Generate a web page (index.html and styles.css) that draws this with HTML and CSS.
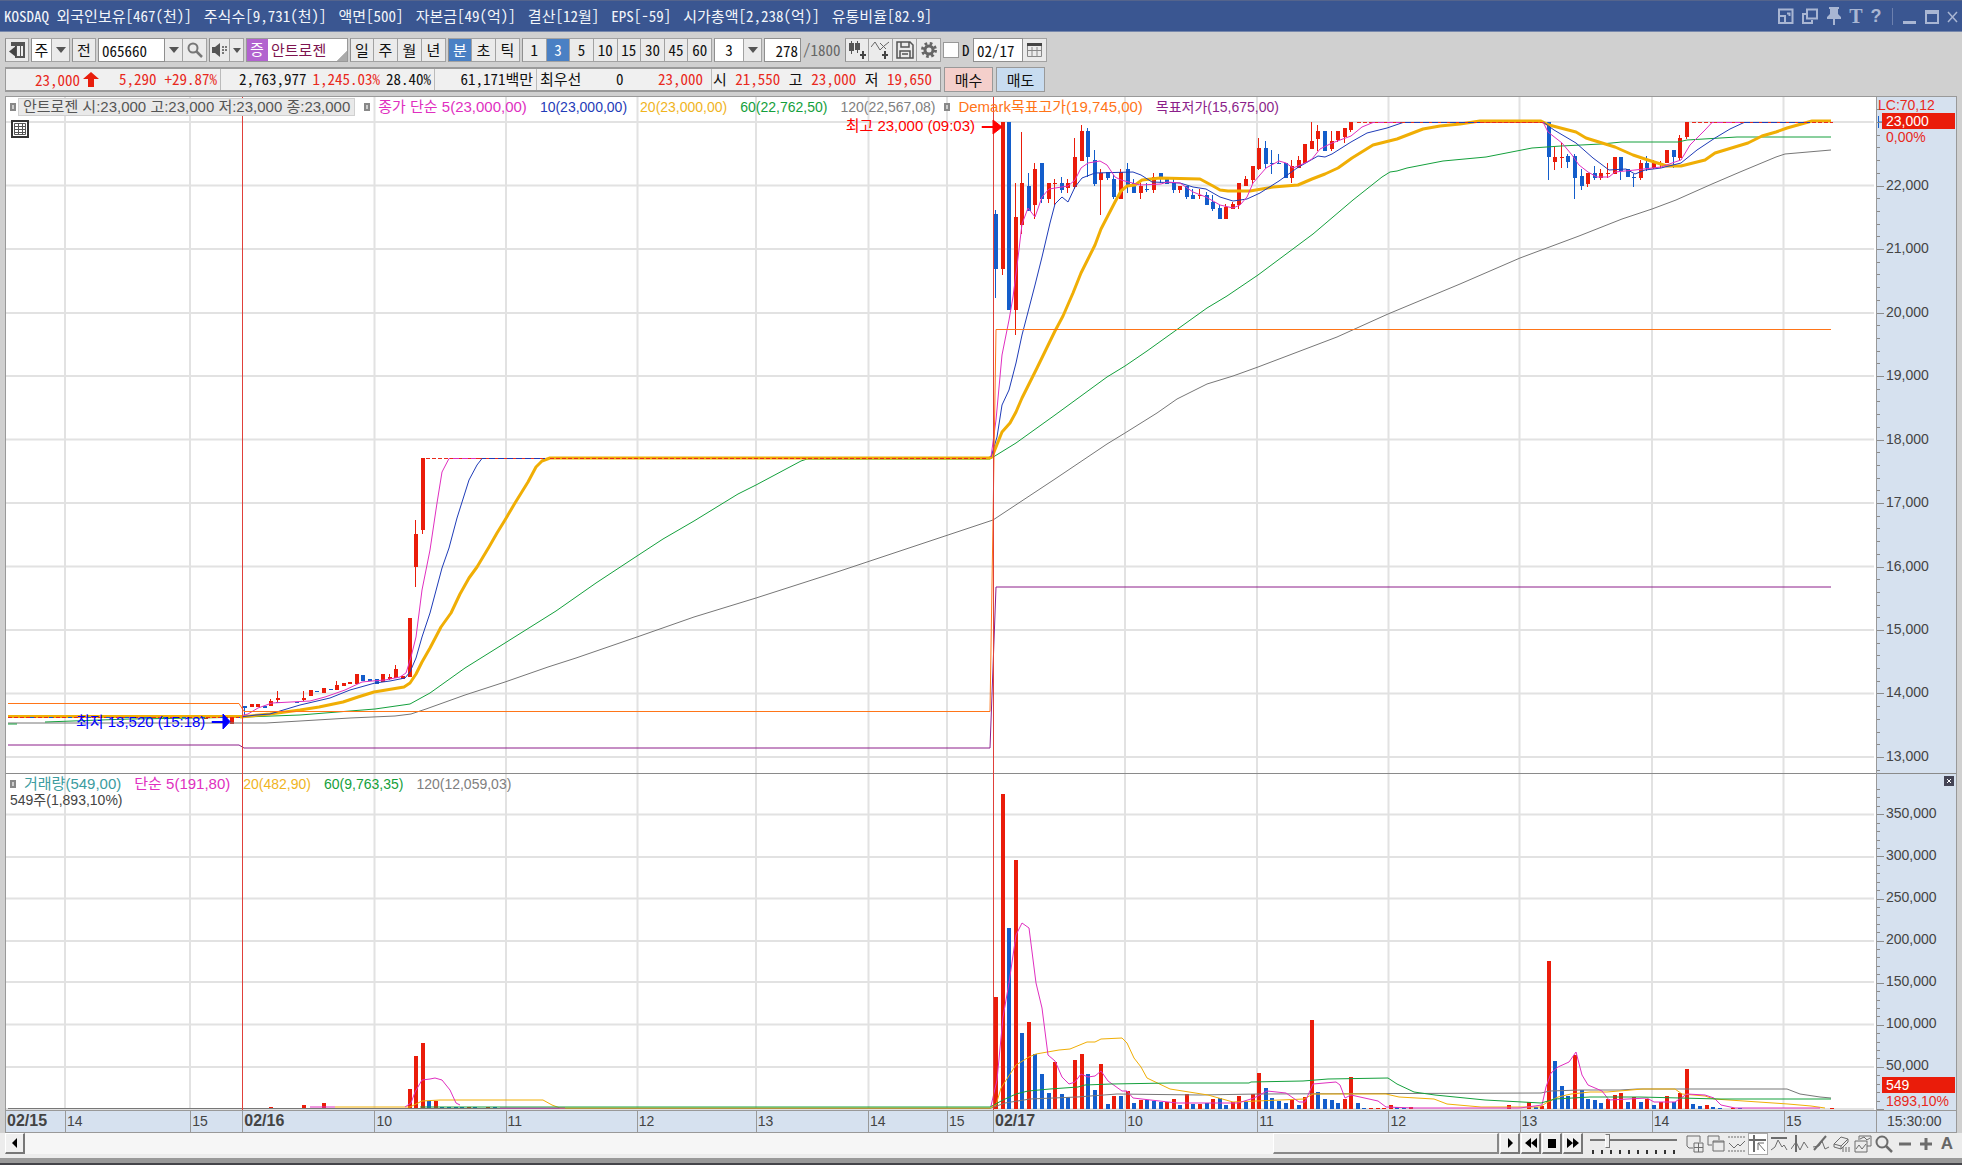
FILE: index.html
```
<!DOCTYPE html>
<html lang="ko">
<head>
<meta charset="utf-8">
<title>안트로젠 차트</title>
<link rel="stylesheet" href="styles.css">
</head>
<body>
<header class="titlebar">
  <h1 class="title"><span>KOSDAQ 외국인보유[467(천)]</span><span>주식수[9,731(천)]</span><span>액면[500]</span><span>자본금[49(억)]</span><span>결산[12월]</span><span>EPS[-59]</span><span>시가총액[2,238(억)]</span><span>유통비율[82.9]</span></h1>
  <div class="winbtns">
    <button aria-label="화면 분할"><svg width="16" height="16" viewBox="0 0 16 16"><path d="M1 1.500H14.500V15H1ZM1 8H7V15M9 5.500h2.500V8" fill="none" stroke="currentColor" stroke-width="2"/></svg></button>
    <button aria-label="화면 복사"><svg width="16" height="16" viewBox="0 0 16 16"><path d="M5 1.500h10v9H5ZM4 6H1v9h9v-3" fill="none" stroke="currentColor" stroke-width="2"/></svg></button>
    <button aria-label="고정"><svg width="16" height="18" viewBox="0 0 16 18"><path d="M3 0h10v2h-1v5l3 3v2H9v6H7v-6H1v-2l3-3V2H3z" fill="currentColor"/></svg></button>
    <button class="serif" aria-label="글꼴">T</button>
    <button class="qmark" aria-label="도움말">?</button>
    <span class="winsep"></span>
    <button aria-label="최소화"><svg width="14" height="16" viewBox="0 0 14 16"><path d="M0 13h13v3H0z" fill="currentColor"/></svg></button>
    <button aria-label="최대화"><svg width="14" height="16" viewBox="0 0 14 16"><path d="M1 3h12v12H1Z" fill="none" stroke="currentColor" stroke-width="2"/><path d="M0 2h14v4H0z" fill="currentColor"/></svg></button>
    <button aria-label="닫기"><svg width="11" height="14" viewBox="0 0 11 14"><path d="M1 3L10 13M10 3L1 13" fill="none" stroke="currentColor" stroke-width="1.500"/></svg></button>
  </div>
</header>

<div class="toolbar">
  <button class="b w24" aria-label="목록"><svg width="16" height="16" viewBox="0 0 16 16"><path d="M2 0h14v16H6V4H2z" fill="#555"/><path d="M8 4h3v10H8zM12 4h2v10h-2z" fill="#eee"/><path d="M7 4v11L0 9.500z" fill="#444"/></svg></button>
  <div class="group"><button class="b white w21">주</button><button class="b w18" aria-label="주기 선택"><i class="tri"></i></button></div>
  <button class="b w24">전</button>
  <div class="group"><input class="field w67" aria-label="종목코드" value="065660"><button class="b w18" aria-label="종목 목록"><i class="tri"></i></button><button class="b w24" aria-label="검색"><svg width="16" height="16" viewBox="0 0 16 16"><circle cx="6" cy="6" r="4.500" fill="none" stroke="#777" stroke-width="2"/><path d="M9 9l6 6" stroke="#777" stroke-width="2.500"/></svg></button></div>
  <div class="group"><button class="b w21" aria-label="음성"><svg width="16" height="14" viewBox="0 0 16 14"><path d="M0 4h3l5-4v14l-5-4H0z" fill="#555"/><path d="M10 4h2M13 4h2M10 7h2M13 7h2M10 10h2" stroke="#777" stroke-width="2"/></svg></button><button class="b w14" aria-label="음성 설정"><i class="tri sm"></i></button></div>
  <div class="stock"><span class="badge">증</span><span class="name">안트로젠</span></div>
  <div class="group"><button class="b w24">일</button><button class="b w24">주</button><button class="b w24">월</button><button class="b w24">년</button></div>
  <div class="group"><button class="b w24 on">분</button><button class="b w24">초</button><button class="b w24">틱</button></div>
  <div class="group minutes"><button class="b">1</button><button class="b on">3</button><button class="b">5</button><button class="b">10</button><button class="b">15</button><button class="b">30</button><button class="b">45</button><button class="b">60</button></div>
  <div class="group"><button class="b white w30">3</button><button class="b w18" aria-label="분 선택"><i class="tri"></i></button></div>
  <div class="count"><input class="field w37 right" aria-label="조회 개수" value="278"><span class="total">/1800</span></div>
  <div class="group">
    <button class="b w24" aria-label="지표 추가"><svg width="19" height="18" viewBox="0 0 19 18"><path d="M3.500 0v13M9.500 0v12" stroke="#555"/><path d="M1 2h5v8H1zM7 2h5v7H7z" fill="#555"/><path d="M15 10v8M12 14h6" stroke="#444" stroke-width="2"/></svg></button>
    <button class="b w24" aria-label="선 추가"><svg width="19" height="18" viewBox="0 0 19 18"><path d="M0 6L4 1l5 8 4-4 5-4M9 2l6 6" fill="none" stroke="#666"/><path d="M14 10v8M11 14h6" stroke="#444" stroke-width="2"/></svg></button>
    <button class="b w24" aria-label="저장"><svg width="18" height="18" viewBox="0 0 18 18"><path d="M1 1h13l3 3v13H1ZM5 1v5h8V1M4 17v-7h10v7M6 13h6" fill="none" stroke="#555" stroke-width="1.500"/></svg></button>
    <button class="b w24" aria-label="설정"><svg width="16" height="16" viewBox="0 0 16 16"><circle cx="8" cy="8" r="6.500" fill="none" stroke="#666" stroke-width="3" stroke-dasharray="2.600 2.500"/><circle cx="8" cy="8" r="4" fill="none" stroke="#666" stroke-width="3"/></svg></button>
  </div>
  <label class="dcheck"><input type="checkbox">D</label>
  <div class="group"><input class="field w50" aria-label="날짜" value="02/17"><button class="b w24" aria-label="달력"><svg width="15" height="14" viewBox="0 0 15 14"><path d="M.5.500h14v13H.5ZM1 7.500h13M5 4v9M10 4v9" fill="none" stroke="#888"/><path d="M0 0h15v3H0z" fill="#444"/></svg></button></div>
</div>

<div class="quote">
  <div class="quotebox">
    <div class="q q1"><span class="up">23,000<svg class="arrow" width="16" height="15" viewBox="0 0 16 15"><path d="M8 0l8 7h-5v8H5V7H0z" fill="#e81e0c"/></svg></span><span class="up">5,290</span><span class="up">+29.87%</span></div>
    <div class="q q2"><span>2,763,977</span><span class="up">1,245.03%</span><span>28.40%</span></div>
    <div class="q q3"><span>61,171백만</span></div>
    <div class="q q4"><span>최우선</span><span>0</span><span class="up">23,000</span></div>
    <div class="q q5"><span>시</span><span class="up">21,550</span><span>고</span><span class="up">23,000</span><span>저</span><span class="up">19,650</span></div>
  </div>
  <button class="trade buy">매수</button>
  <button class="trade sell">매도</button>
</div>

<main class="chart">
  <div class="plot">
    <svg id="plot" class="plotsvg" viewBox="6 97 1870 1013" preserveAspectRatio="none" role="img" aria-label="주가와 거래량 차트">
      <path class="grid" d="M5 122H1874M5 185.500H1874M5 249H1874M5 313H1874M5 376H1874M5 439.500H1874M5 503H1874M5 566.500H1874M5 630H1874M5 693.500H1874M5 757H1874M5 814.500H1874M5 857H1874M5 898.500H1874M5 941H1874M5 982H1874M5 1024.500H1874M5 1067H1874M5 1109H1874M65 97V1111M190 97V1111M374.500 97V1111M506 97V1111M637.500 97V1111M756 97V1111M868.500 97V1111M947 97V1111M1125 97V1111M1257 97V1111M1388.500 97V1111M1519.500 97V1111M1652 97V1111M1783.500 97V1111"/>
      <path class="split" d="M5 773.500H1876"/>
      <g id="bars"></g>
      <path class="dash red" d="M426 458.500H988M1357 122.500H1545M1692 122.500H1833"/>
      <path class="dash blue alt" d="M276 702.500H300"/>
      <path class="ln g120" d="M8 723L266 723 300 721 350 718 395 716 411 714 426 709 465 695 505 682 548 667 576 658 637 637 694 617 756 598 840 571 993 520 1055 479 1107 444 1125 433 1157 413 1177 399 1207 384 1233 376 1258 367 1287 356 1337 337 1388 314 1460 284 1520 258 1579 236 1622 219 1652 209 1676 200 1712 184 1740 172 1776 157 1785 154 1831 150"/>
      <path class="ln g60" d="M8 724L17 724M45 722L100 720 130 719 200 718 245 717 300 715 350 711 375 709 410 704 430 693 465 668 505 643 556 611 596 583 637 556 663 539 694 521 738 494 756 485 801 461 807 459 990 459 1016 443 1055 415 1107 377 1125 366 1147 351 1207 308 1227 296 1258 275 1313 234 1353 200 1382 177 1390 172 1397 171 1407 168 1443 161 1486 157 1532 148 1561 146 1601 144 1622 142 1678 142 1687 140 1737 137 1831 137"/>
      <path class="ln g20 thick" d="M240 717L270 714 300 710 319 707 343 702 358 697 374 692 404 687 410 683 416 674 422 662 430 648 441 627 451 613 460 594 469 578 477 567 489 547 497 533 505 520 515 503 528 482 536 467 542 461 550 458 989 458 992 457 996 447 1002 432 1010 423 1016 412 1022 398 1037 368 1055 331 1063 316 1073 293 1081 273 1095 245 1101 229 1115 202 1121 191 1127 186 1135 185 1142 180 1160 178 1200 179 1213 186 1220 190 1228 191 1250 191 1273 187 1298 185 1312 179 1325 174 1338 168 1352 158 1373 145 1397 139 1410 134 1423 129 1440 126 1460 124 1480 121 1541 121 1549 125 1576 132 1586 138 1615 147 1633 155 1651 161 1667 166 1681 166 1705 160 1715 153 1748 143 1762 136 1776 132 1787 128 1812 121 1831 121"/>
      <path class="dash red" d="M550 458.500H988M1480 122.500H1545M1812 122.500H1833"/>
      <path class="ln g10" d="M240 717L256 715 270 714 300 705 330 698 350 690 375 683 390 681 405 678 410 672 416 658 422 637 430 613 442 568 449 548 457 518 469 480 477 465 482 458.500 545 458.500M991 457L997 437 1002 405 1009 390 1016 363 1022 335 1028 312 1035 285 1042 257 1050 223 1055 204 1062 197 1068 202 1075 187 1082 178 1095 173 1133 172 1141 175 1152 182 1180 183 1193 187 1206 189 1220 197 1233 201 1247 199 1260 193 1279 181 1297 168 1318 156 1325 157 1332 154 1351 142 1367 133 1387 128 1403 122.500 1480 122.500M1543 122L1554 130 1576 143 1593 158 1609 170 1626 169 1635 174 1645 170 1661 168 1681 163 1697 150 1715 138 1730 129 1744 122.500 1810 122.500"/>
      <path class="ln g5" d="M240 716L248 714 258 708 272 703 310 701 325 697 345 690 362 682 372 681 385 680 400 677 406 673 411 657 416 637 422 590 430 550 437 503 442 472 449 458.500 476 458.500M991 457L996 420 1002 355 1009 320 1013 297 1018 258 1022 224 1028 208 1035 217 1042 197 1049 189 1068 186 1075 180 1081 168 1088 163 1100 161 1107 165 1115 177 1121 180 1140 185 1161 184 1167 182 1180 183 1193 192 1206 197 1220 205 1233 208 1240 205 1247 197 1253 183 1266 168 1279 161 1286 163 1293 168 1305 163 1312 159 1320 149 1332 143 1351 136 1362 127 1373 122.500 1400 122.500M1543 122L1548 132 1562 143 1572 155 1579 165 1588 172 1597 177 1609 177 1615 172 1635 170 1661 167 1675 162 1681 160 1690 145 1705 130 1712 122.500 1740 122.500"/>
      <path class="dash red thin" d="M450 458.500H545M1375 122.500H1480M1714 122.500H1812"/>
      <path class="ln g20 thick" d="M8 716.500H243"/>
      <path class="dash red" d="M8 717.500H240"/>
      <path class="dash blue alt" d="M30 717.500H240"/>
      <path class="ln high" d="M8 703.500H239L244 711.500H990L996 329.500H1831"/>
      <path class="ln low" d="M8 745H239L244 748H990L996 587H1831"/>
      <path class="ln g120" d="M8 1108.500H990L1005 1103 1030 1099 1077 1097 1117 1094 1200 1095 1258 1094 1541 1093 1550 1091 1580 1090 1620 1090 1637 1089 1787 1089 1800 1094 1820 1097 1831 1098"/>
      <path class="ln g20" d="M335 1107L410 1107 422 1101 440 1100 543 1100 552 1105 560 1108 990 1108 996 1105 1001 1088 1016 1065 1029 1057 1036 1054 1059 1050 1070 1049 1087 1042 1095 1042 1101 1039 1122 1038 1127 1043 1134 1058 1141 1067 1147 1078 1170 1089 1208 1095 1233 1102 1304 1099 1313 1094 1386 1094 1399 1097 1434 1099 1447 1104 1481 1107 1540 1107 1546 1103 1558 1097 1571 1094 1590 1092 1607 1092 1643 1089 1675 1089 1682 1094 1705 1096 1714 1099 1788 1104 1811 1106 1825 1108"/>
      <path class="ln g5" d="M310 1107L335 1107M405 1107L411 1103 415 1092 422 1080 430 1079 435 1078 442 1080 450 1090 456 1103 460 1105M500 1108L565 1108M991 1106L997 1080 1003 1017 1009 983 1016 935 1022 923 1029 928 1036 983 1042 1008 1048 1055 1055 1061 1062 1077 1069 1084 1075 1082 1081 1074 1088 1077 1095 1076 1101 1071 1108 1081 1122 1091 1127 1091 1133 1098 1177 1103 1238 1103 1254 1098 1267 1091 1286 1093 1299 1102 1305 1102 1313 1084 1336 1082 1340 1085 1345 1098 1351 1095 1378 1101 1386 1107 1414 1108 1520 1108 1542 1105 1546 1087 1551 1073 1558 1067 1569 1062 1576 1052 1582 1075 1588 1085 1602 1091 1609 1100 1647 1098 1654 1102 1675 1102 1687 1094 1705 1095 1714 1098 1721 1105 1735 1108 1820 1108"/>
      <path class="ln g60" d="M420 1107H990L1003 1100 1016 1094 1028 1091 1050 1089 1078 1087 1085 1085 1111 1084 1170 1083 1249 1083 1251 1082 1303 1081 1328 1079 1388 1078 1397 1084 1414 1092 1435 1095 1485 1100 1541 1103 1555 1099 1590 1097 1640 1097 1680 1098 1720 1099 1831 1099"/>
      <path class="day" d="M242.500 97V1111M993.500 97V1111"/>
      <path d="M982 126.500H993V120L1002 127 993 134V127.500H982Z" fill="#f00" stroke="#f00"/>
      <path d="M212 721.500H223V714L230 721.500 223 729V722.500H212Z" fill="#00f" stroke="#00f"/>
    </svg>
    <div class="legend top">
      <i class="mark"></i><span class="ohlc">안트로젠 시:23,000 고:23,000 저:23,000 종:23,000</span>
      <i class="mark m2"></i><span class="ko c5">종가 단순 5(23,000,00)</span><span class="c10">10(23,000,00)</span><span class="c20">20(23,000,00)</span><span class="c60">60(22,762,50)</span><span class="c120">120(22,567,08)</span>
      <i class="mark m3"></i><span class="ko chigh">Demark목표고가(19,745,00)</span><span class="clow">목표저가(15,675,00)</span>
    </div>
    <button class="gridbtn" aria-label="표 보기"><svg width="12" height="12" viewBox="0 0 12 12"><path d="M.5.500h11v11H.5ZM0 3.500h12M0 6.500h12M0 9.500h12M4.500 0v12M8.500 0v12" fill="none" stroke="#555"/></svg></button>
    <span class="note hi">최고 23,000 (09:03)</span>
    <span class="note lo">최저 13,520 (15:18)</span>
    <div class="volinfo">
      <div class="legend">
        <i class="mark"></i><span class="ko cvol">거래량(549,00)</span><span class="ko c5">단순 5(191,80)</span><span class="c20">20(482,90)</span><span class="c60">60(9,763,35)</span><span class="c120">120(12,059,03)</span>
      </div>
      <span class="volnow">549주(1,893,10%)</span>
    </div>
  </div>

  <div class="axis">
    <svg id="ticks" class="axissvg" viewBox="0 97 79 1013" preserveAspectRatio="none" aria-hidden="true"><path class="split" d="M0 773.500H81"/><path d="M1.500 116V128M1.500 122H5" stroke="#135dcb"/></svg>
    <div class="prices">
      <div class="last"><span class="lc">LC:70,12</span><span class="tag">23,000</span><span class="pct">0,00%</span></div>
      <span>22,000</span><span>21,000</span><span>20,000</span><span>19,000</span><span>18,000</span><span>17,000</span><span>16,000</span><span>15,000</span><span>14,000</span><span>13,000</span>
    </div>
    <div class="volumes">
      <div class="volhead"><button aria-label="닫기"><svg width="6" height="6" viewBox="0 0 6 6"><path d="M1 1l4 4M5 1L1 5" stroke="#fff"/></svg></button></div>
      <span>350,000</span><span>300,000</span><span>250,000</span><span>200,000</span><span>150,000</span><span>100,000</span>
      <div class="vlast"><span>50,000</span><span class="tag">549</span><span class="pct">1893,10%</span></div>
    </div>
  </div>

  <div class="times"><b>02/15</b><span>14</span><span>15</span><b>02/16</b><span>10</span><span>11</span><span>12</span><span>13</span><span>14</span><span>15</span><b>02/17</b><span>10</span><span>11</span><span>12</span><span>13</span><span>14</span><span>15</span></div>
  <div class="clock">15:30:00</div>
</main>

<footer class="bottom">
  <button class="raised" aria-label="왼쪽"><svg width="8" height="10" viewBox="0 0 8 10"><path d="M6 0v10L1 5z"/></svg></button>
  <div class="track"><div class="thumb"></div></div>
  <div class="play">
    <button class="raised" aria-label="재생"><svg width="8" height="10" viewBox="0 0 8 10"><path d="M2 0v10l5-5z"/></svg></button>
    <button class="raised" aria-label="뒤로"><svg width="12" height="10" viewBox="0 0 12 10"><path d="M6 0v10L0 5zM12 0v10L6 5z"/></svg></button>
    <button class="raised" aria-label="정지"><svg width="8" height="9" viewBox="0 0 8 9"><path d="M0 0h8v9H0z"/></svg></button>
    <button class="raised" aria-label="앞으로"><svg width="12" height="10" viewBox="0 0 12 10"><path d="M0 0v10l6-5zM6 0v10l6-5z"/></svg></button>
  </div>
  <div class="zoomer"><input type="range" min="0" max="100" value="18" aria-label="확대 비율"></div>
  <div class="tools">
    <button aria-label="창 추가"><svg width="18" height="18" viewBox="0 0 18 18"><path d="M7 13H3L1 11V1h13v6M8 8h9v9H8zM12.500 8v9M8 12.500h9"/></svg></button>
    <button aria-label="창 겹침"><svg width="18" height="18" viewBox="0 0 18 18"><path d="M5 10H1V1h11v4M6 6h11v10H6zM6 7h11"/></svg></button>
    <button aria-label="범위"><svg width="18" height="18" viewBox="0 0 18 18"><path stroke-dasharray="2 1" d="M0 2h17M0 16h17"/><path d="M1 8l5 5 4-4 2 2 5-5"/></svg></button>
    <button class="pressed" aria-label="십자선"><svg width="18" height="18" viewBox="0 0 18 18"><path d="M5 0v17M0 5h17" stroke-width="2"/><path d="M9 15V8h6M9 8l7 8"/></svg></button>
    <button aria-label="추세"><svg width="18" height="18" viewBox="0 0 18 18"><path d="M1 3h16" stroke-width="2"/><path d="M1 15l4-3 3-7 4 7 2-2 3 5"/></svg></button>
    <button aria-label="수직선"><svg width="18" height="18" viewBox="0 0 18 18"><path d="M5 0v17" stroke-width="2"/><path d="M0 14l5-7 4 8 4-8 4 6"/></svg></button>
    <button aria-label="사선"><svg width="18" height="18" viewBox="0 0 18 18"><path d="M2 15L14 1" stroke-width="2"/><path d="M1 12l6-1 3-5 3 8 4-2"/></svg></button>
    <button aria-label="전체 삭제"><svg width="18" height="18" viewBox="0 0 18 18"><path d="M1 9l7-7 7 2v3l-7 7-7-2zM1 9l7 2 7-7M8 11v3M10 17v-5M13 17v-5M16 17v-5"/></svg></button>
    <button aria-label="차트 복사"><svg width="18" height="18" viewBox="0 0 18 18"><path d="M5 5V1h12v10h-4M1 6h12v11H1zM2 14l3-4 3 4 4-5M6 4l4-2 3 3 3-2"/></svg></button>
    <button aria-label="돋보기"><svg width="18" height="18" viewBox="0 0 18 18"><circle cx="7" cy="7" r="5.500" stroke-width="2"/><path d="M11 11l6 6" stroke-width="2.500"/></svg></button>
    <button aria-label="축소"><svg width="18" height="18" viewBox="0 0 18 18"><path d="M3 9h12" stroke-width="3"/></svg></button>
    <button aria-label="확대"><svg width="18" height="18" viewBox="0 0 18 18"><path d="M3 9h12M9 3v12" stroke-width="3"/></svg></button>
    <button class="auto" aria-label="자동">A</button>
  </div>
</footer>
<script src="chart.js"></script>
</body>
</html>
```
FILE: styles.css
```
* { box-sizing: border-box; }
html, body { height: 100%; }
body {
  margin: 0;
  display: flex;
  flex-direction: column;
  background: #d0d0d0;
  color: #111;
  font: 15px/18px "Noto Sans Mono CJK KR", "Noto Sans CJK KR", "Liberation Sans", sans-serif;
  border-bottom: 2px solid #45454a;
}
button, input { font: inherit; color: inherit; margin: 0; padding: 0; border: 0; border-radius: 0; background: none; }
button { display: flex; align-items: center; justify-content: center; flex: none; }
svg { display: block; }

.titlebar { flex: none; height: 32px; display: flex; align-items: center; justify-content: space-between; padding: 0 4px; background: #3a5691; border-top: 1px solid #54648c; border-bottom: 1px solid #7788ac; color: #f2f5fa; }
.title { margin: 0; display: flex; gap: 12px; font-size: 15px; font-weight: 400; white-space: pre; }
.winbtns { display: flex; align-items: center; gap: 8px; color: #a9b6d3; }
.serif { width: 12px; font: 700 20px/18px "Liberation Serif", serif; }
.qmark { width: 12px; font: 700 18px/18px "Liberation Sans", sans-serif; }
.winsep { width: 1px; height: 17px; background: #6c80ae; margin: 0 2px; }

.toolbar { flex: none; display: flex; gap: 2px; padding: 6px 5px 4px; }
.b { height: 24px; background: #ebebeb; border: 1px solid #a2a2a2; border-width: 1px 1px 1px 0; }
.group { display: flex; }
.group > :first-child, .toolbar > .b { border-left: 1px solid #8f8f8f; }
.minutes { width: 190px; }
.minutes .b { flex: 1; }
.b.white { background: #fff; }
.b.on { background: #4a80c4; color: #fff; }
.field { height: 24px; background: #fff; border: 1px solid #8f8f8f; padding: 0 3px; }
.right { text-align: right; padding: 0 2px; }
.w14 { width: 14px; } .w18 { width: 18px; } .w21 { width: 21px; } .w24 { width: 24px; }
.w30 { width: 30px; } .w37 { width: 37px; } .w50 { width: 50px; } .w67 { width: 67px; }
.tri { border: 5px solid transparent; border-top: 6px solid #555; border-bottom: 0; }
.tri.sm { border-width: 5px 4px 0; }
.stock { width: 102px; height: 24px; display: flex; align-items: center; gap: 3px; border: 1px solid #999; background: linear-gradient(135deg, #fff 91%, #aaa 92%); }
.badge { width: 21px; height: 22px; padding: 1px 3px; background: #b263cf; color: #fff; }
.name { color: #7e1450; }
.count { width: 79px; display: flex; align-items: center; gap: 2px; color: #666; }
.count .field { color: #111; }
.dcheck { width: 28px; display: flex; align-items: center; gap: 3px; font-weight: 500; }
.dcheck input { appearance: none; flex: none; width: 16px; height: 16px; background: #fff; border: 1px solid #999; }

.quote { flex: none; display: flex; gap: 3px; padding: 1px 5px 0; height: 30px; }
.quotebox { width: 936px; height: 25px; display: flex; background: #f0f0f0; border: 2px solid #9a9a9a; border-width: 2px 1px; line-height: 20px; }
.q { display: flex; justify-content: flex-end; border-right: 1px solid #bbb; padding-right: 3px; white-space: pre; }
.q:last-child { border: 0; }
.q1 { width: 215px; gap: 8px; }
.q2 { width: 214px; gap: 6px; }
.q3 { width: 102px; }
.q4 { width: 175px; padding: 0 8px 0 3px; justify-content: space-between; }
.q5 { flex: 1; padding: 0 8px 0 1px; justify-content: space-between; }
.up { color: #e8291c; }
.q1 .up:first-child { display: flex; align-items: center; gap: 3px; margin-right: 12px; }
.trade { width: 49px; height: 25px; border: 1px solid #999; }
.buy { background: #f4cfcb; }
.sell { background: #c8dcf0; }

.chart { flex: 1; min-height: 0; margin: 0 5px; display: grid; grid-template: minmax(0, 1fr) 23px / minmax(0, 1fr) 81px; border-top: 1px solid #999; font: 14px/18px "Liberation Sans", "Noto Sans CJK KR", sans-serif; }
.plot { position: relative; min-height: 0; background: #fff; border-left: 1px solid #999; overflow: hidden; }
.plotsvg { position: absolute; inset: 0; width: 100%; height: 100%; }
.grid { stroke: #e2e2e2; stroke-width: 2; }
.split { stroke: #8a8a8a; fill: none; }
.ln { fill: none; stroke-width: 1; stroke-linejoin: round; }
.thick.ln { stroke-width: 3; }
.dash { stroke-dasharray: 4 2; fill: none; stroke-width: 1; }
.dash.thin { stroke-dasharray: 3 6; }
.dash.alt { stroke-dasharray: 4 15; }
.red { stroke: #e8291c; } .blue { stroke: #135dcb; }
.g5 { stroke: #e02fc0; } .g10 { stroke: #1f3cb8; } .g20 { stroke: #f0ae05; } .g60 { stroke: #14a03c; } .g120 { stroke: #777; }
.high { stroke: #ff7518; } .low { stroke: #8c1f8a; }
.day { stroke: #e0403a; fill: none; }
.up-bar { fill: #ea1c0a; } .down-bar { fill: #135dcb; }

.legend { display: flex; align-items: center; gap: 13px; white-space: pre; }
.legend.top { position: absolute; left: 4px; top: 1px; }
.volinfo { position: absolute; left: 4px; top: 67%; line-height: 16px; }
.ko, .ohlc, .note { font-size: 15px; }
.mark { width: 6px; height: 8px; border: 2px solid #888; background: #ccc; }
.mark + span { margin-left: -5px; }
.m2, .m3 { margin-left: -4px; }
.mark + .ohlc { margin-left: -11px; background: #e9e9e9; border: 1px solid #d0d0d0; padding: 0 4px; color: #555; line-height: 16px; }
.c5 { color: #e02fc0; } .c10 { color: #1f3cb8; } .c20 { color: #f0b41e; } .c60 { color: #14a03c; } .c120 { color: #808080; }
.chigh { color: #ff7518; } .clow { color: #8c1f8a; } .cvol { color: #3c9ca0; }
.volnow { color: #444; }
.gridbtn { position: absolute; left: 5px; top: 23px; width: 18px; height: 18px; border: 2px solid #333; background: #fff; }
.note { position: absolute; white-space: pre; }
.hi { right: 901px; top: 20px; color: #f00; }
.lo { left: 70px; top: 61%; line-height: 13px; color: #00f; }

.axis { position: relative; display: grid; grid-template-rows: minmax(0, 676fr) minmax(0, 338fr); background: #d6e1ef; border: 1px solid #999; border-width: 0 1px; color: #444; }
.axissvg { position: absolute; inset: 0; width: 100%; height: 100%; }
.prices, .volumes { position: relative; display: grid; padding-left: 9px; min-height: 0; }
.prices { grid-template-rows: minmax(0, 158fr) repeat(9, minmax(0, 127fr)) minmax(0, 51fr); }
.volumes { grid-template-rows: minmax(0, 32fr) repeat(6, minmax(0, 42fr)) minmax(0, 54fr); }
.last, .vlast { display: flex; flex-direction: column; align-items: flex-start; color: #e8291c; }
.lc { margin-left: -8px; line-height: 16px; }
.tag { width: 73px; height: 16px; margin-left: -4px; padding-left: 4px; background: #ea1c0a; color: #fff; line-height: 16px; }
.pct { line-height: 16px; }
.vlast > :first-child { color: #444; height: 21px; }
.volhead { display: flex; justify-content: flex-end; padding: 4px 2px; }
.volhead button { width: 10px; height: 10px; background: #445; }

.times, .clock { background: #d6e1ef; border: 1px solid #999; border-width: 1px 0 1px 1px; color: #444; line-height: 20px; }
.times { display: grid; grid-template-columns: 59fr 125fr 52fr 132fr 131fr 131fr 119fr 112fr 79fr 46fr 132fr 132fr 131fr 131fr 132fr 132fr 92fr; }
.times > * { padding-left: 1px; border-left: 1px solid #999; min-width: 0; }
.times > :first-child { border: 0; }
.times b { font-size: 16px; }
.clock { padding-left: 10px; border-right-width: 1px; }

.bottom { flex: none; height: 30px; display: flex; align-items: flex-start; padding: 0 5px; background: #ececec; border-bottom: 5px solid #999; }
.raised { width: 20px; height: 21px; background: #f0f0f0; border: 1px solid #fff; border-right: 2px solid #777; border-bottom: 2px solid #777; }
.track { flex: 1; display: flex; height: 21px; background: #f6f6f6; }
.thumb { width: 226px; margin-left: auto; background: #eee; border: 1px solid #fff; border-right: 2px solid #888; border-bottom: 2px solid #888; }
.play { display: flex; gap: 1px; margin-left: 1px; }
.zoomer { width: 87px; height: 22px; margin: 1px 8px 0 7px; background: repeating-linear-gradient(90deg, #333 0 2px, transparent 2px 9px) 2px 16px / 85px 4px no-repeat; }
.zoomer input { display: block; appearance: none; width: 87px; height: 14px; background: linear-gradient(#777, #777) 0 5px / 100% 2px no-repeat; }
.zoomer input::-webkit-slider-thumb { appearance: none; width: 5px; height: 14px; background: #f0f0f0; border: 1px solid #777; border-left-color: #fff; }
.tools { display: flex; align-items: center; height: 22px; gap: 1px; }
.tools button { width: 20px; height: 22px; }
.tools svg { fill: none; stroke: #6c6c6c; stroke-width: 1; }
.tools .pressed { background: #fff; border: 1px solid #aaa; }
.tools .auto { font: 700 17px/18px "Liberation Sans", sans-serif; color: #666; }
```
FILE: chart.js
```
// One slot per 3-minute candle.
const STEP = 6.58;
const NS = 'http://www.w3.org/2000/svg';
const bars = document.getElementById('bars');

function rect(cls, x, y, w, h) {
  const r = document.createElementNS(NS, 'rect');
  r.setAttribute('class', cls);
  r.setAttribute('x', Math.round(x));
  r.setAttribute('y', Math.round(y));
  r.setAttribute('width', w);
  r.setAttribute('height', Math.max(1, Math.round(h)));
  bars.appendChild(r);
}

// Row: slot, direction, body top, body bottom, high, low (thirds of a unit below base).
function candles(x0, base, text) {
  text.trim().split(/[;\n]+/).forEach(row => {
    const [i, dir, t, b, hi = t, lo = b] = row.trim().split(' ');
    const cls = dir === 'R' ? 'up-bar' : 'down-bar';
    const x = Math.round(x0 + i * STEP);
    const y = v => base + v / 3;
    rect(cls, x - 2, y(t), 4, (b - t) / 3);
    rect(cls, x - 1, y(hi), 1, (lo - hi) / 3);
  });
}

candles(245, 640, `-9 B 232 236;-6 R 228 236;-3 B 232 245;-2 R 232 253;0 B 197 203 197 228;1 R 192 202;2 R 192 202;3 B 197 202;4 R 182 198 177 198
5 R 174 180 153 185;9 R 174 181 153 182;10 R 150 168;11 B 153 157;12 R 143 158;13 B 148 151;14 R 135 150 124 150
15 R 128 138;16 R 125 131;17 R 101 130;18 B 105 123;19 B 118 123;20 B 117 133;21 R 101 125;22 R 111 118 101 118
23 R 87 113 76 113;24 R 107 116;25 R -66 112;26 R -317 -217 -360 -160;27 R -547 -330 -547 -318`);

candles(996, 100, `0 B 342 507 330 593;1 R 66 507 66 525;2 B 66 630;3 R 352 630 248 705;4 R 248 375 95 402;5 B 257 332 218 332
6 R 207 315 188 355;7 B 188 297 188 307;8 R 248 297 248 307;9 R 248 251 237 315;10 B 248 270 230 278;11 R 248 262 237 278
12 R 170 260 113 265;13 R 94 184 76 184;14 B 94 172 84 230;15 B 180 252 150 258;16 R 218 240 208 345;17 B 216 234 216 240
18 B 236 290 225 297;19 R 216 297 208 297;20 B 207 258 188 278;21 B 248 278 237 278;22 R 257 277 250 297;23 B 267 270 250 278
24 R 230 270 218 278;25 B 218 232 218 248;26 B 230 250;27 B 250 270 237 278;28 R 257 270 257 278;29 B 257 290 257 297
30 B 286 297 268 297;31 R 285 288 268 297;32 B 285 315 275 315;33 B 305 327 286 335;34 B 323 356 315 356;35 R 320 356 312 356
36 R 312 326 305 326;37 R 248 315 248 326;38 R 237 258 228 258;39 R 199 240 199 252;40 R 143 205 113 210;41 B 143 192 124 205
42 B 188 191 150 222;43 B 188 191 162 191;44 B 188 232;45 R 198 235 180 250;46 R 180 203 168 203;47 R 132 188;48 R 124 147 65 147
49 R 94 117 76 153;50 B 94 153;51 R 124 147 94 153;52 R 94 120 94 128;53 R 84 110 84 128;54 R 65 88 65 95
84 B 66 172 66 240;85 R 170 185 142 210;86 R 170 173 128 203;87 B 168 185 162 203;88 B 168 234 162 297;89 B 228 258 207 270
90 R 218 252 218 260;91 B 218 234 198 240;92 R 218 232 207 240;93 R 218 221 188 232;94 R 170 221;95 B 170 213 170 240
96 B 208 233;97 B 230 233 222 260;98 R 188 234 180 240;99 B 188 203 168 213;100 R 188 203 180 207;101 R 190 193 182 203
102 R 150 190;103 B 150 172 150 203;104 R 113 173 105 182;105 R 66 110 66 118`);

// Volume columns: slot, direction, height.
function volumes(x0, text) {
  text.trim().split(/[;\n]+/).forEach(row => {
    const [i, dir, h] = row.trim().split(' ');
    rect(dir === 'R' ? 'up-bar' : 'down-bar', Math.round(x0 + i * STEP) - 2, 1109 - h, 4, +h);
  });
}

volumes(245, `4 R 2;9 R 4;12 R 6;25 R 20;26 R 53;27 R 66;28 B 8;29 R 8;30 B 2;31 B 2;32 B 2;33 B 2;34 R 2;35 B 2;37 R 2;38 B 2`);
volumes(996, `0 R 112;1 R 315;2 B 181;3 R 249;4 B 76;5 R 87;6 B 55;7 B 35;8 B 16;9 R 47;10 B 15;11 B 12;12 R 49;13 R 55;14 B 35;15 B 19
16 R 45;17 B 5;18 R 13;19 B 13;20 R 18;21 B 6;22 R 9;23 B 9;24 B 8;25 B 7;26 R 7;27 R 10;28 B 4;29 R 15;30 B 5;31 R 5
32 B 6;33 R 10;34 B 11;35 B 4;36 R 7;37 R 13;38 B 7;39 R 15;40 R 36;41 B 21;42 B 11;43 B 8;44 B 6;45 R 9;46 B 4;47 R 12
48 R 89;49 B 17;50 B 10;51 B 9;52 B 6;53 R 10;54 R 32;55 B 6;56 B 1;57 R 1;58 R 1;59 R 1;60 R 4;61 B 2;62 B 1;63 R 2
78 R 4;81 R 7;82 B 2;83 R 3;84 R 148;85 B 48;86 B 23;87 B 13;88 R 54;89 B 19;90 B 10;91 B 9;92 B 6;93 R 10;94 R 14;95 R 16
96 B 7;97 R 12;98 B 7;99 R 10;100 B 4;101 R 7;102 R 13;103 B 7;104 R 16;105 R 40;106 B 5;107 B 3;108 R 4;109 B 2;110 B 1
112 R 1;113 B 1;127 R 1`);

// Axis ticks: short ones between labels, long ones on them.
let d = '';
for (let k = 0; k <= 52; k++) {
  const y = Math.round(109.300 + k * 12.7) + 0.5;
  if (y < 773) d += `M0 ${y}H${k % 5 === 1 ? 7 : 3}`;
}
for (let k = 0; k <= 38; k++) {
  d += `M0 ${Math.round(1109 - k * 8.42) + 0.5}H${k % 5 === 0 ? 7 : 3}`;
}
const p = document.createElementNS(NS, 'path');
p.setAttribute('class', 'split');
p.setAttribute('d', d);
document.getElementById('ticks').appendChild(p);
```
